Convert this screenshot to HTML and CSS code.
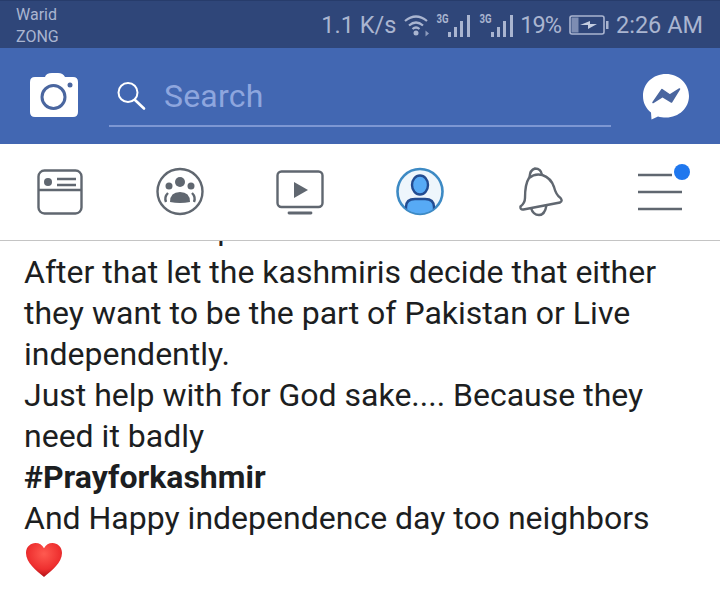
FILE: index.html
```html
<!DOCTYPE html>
<html lang="en">
<head>
<meta charset="utf-8">
<title>Post</title>
<link rel="stylesheet" href="styles.css">
</head>
<body>
<div class="screen">
  <div class="status">
    <div class="carriers"><span>Warid</span><span>ZONG</span></div>
    <div class="indicators">
      <span class="speed">1.1 K/s</span>
      <svg class="wifi" width="27" height="24" viewBox="0 0 27 24"><g fill="none" stroke="#aab5d0" stroke-width="2.200"><path d="M1 8Q12 -1 23 8"/><path d="M5 12.500Q12 6.500 19 12.500"/><path d="M8.500 16Q12 13 15.500 16"/></g><circle cx="12" cy="20" r="2.500" fill="#aab5d0"/><path d="M21.500 17.500l3.500 3-3.500 3z" fill="#8d9bbd"/></svg>
      <span class="sim"><i class="three-g">3G</i><svg width="23" height="22" viewBox="0 0 23 22"><g fill="#aab5d0"><rect x="0" y="17" width="3" height="5"/><rect x="6" y="12" width="3" height="10"/><rect x="12" y="6" width="3" height="16"/><rect x="19" y="0" width="3" height="22"/></g></svg></span>
      <span class="sim"><i class="three-g">3G</i><svg width="23" height="22" viewBox="0 0 23 22"><g fill="#aab5d0"><rect x="0" y="17" width="3" height="5"/><rect x="6" y="12" width="3" height="10"/><rect x="12" y="6" width="3" height="16"/><rect x="19" y="0" width="3" height="22"/></g></svg></span>
      <span class="percent">19%</span>
      <svg class="battery" width="40" height="20" viewBox="0 0 40 20"><rect x="1" y="1" width="34" height="18" rx="2" fill="none" stroke="#aab5d0" stroke-width="1.600"/><rect x="2.500" y="2.500" width="7" height="15" fill="#7d8db2"/><path d="M11 10l10-4v3h7l-9 5v-4z" fill="#c4cde0"/><rect x="37" y="6" width="2.500" height="8" fill="#aab5d0"/></svg>
      <span class="clock">2:26 AM</span>
    </div>
  </div>

  <header class="topbar">
    <svg class="camera" width="48" height="44" viewBox="0 0 48 44"><path fill="#fff" d="M5 4h10Q16 0 22 0h6q5 0 7 4h8q5 0 5 5v30q0 5-5 5H5q-5 0-5-5V9q0-5 5-5z"/><circle cx="23.500" cy="24" r="11.500" fill="none" stroke="#4a669f" stroke-width="3"/><circle cx="40" cy="12" r="2.500" fill="#4a669f"/></svg>
    <div class="search">
      <svg width="32" height="32" viewBox="0 0 32 32"><circle cx="13" cy="12.500" r="9.500" fill="none" stroke="#fff" stroke-width="2"/><path d="M20 20l9 8.500" fill="none" stroke="#fff" stroke-width="2.600" stroke-linecap="round"/></svg>
      <span>Search</span>
    </div>
    <svg class="messenger" width="48" height="48" viewBox="0 0 48 48"><path fill="#fff" d="M24 1C11 1 1 10.500 1 23c0 6.800 3 12.500 8 16.500l.5 7 6.500-3c2.400.7 5 1 8 1 13 0 23-9.500 23-21.500S37 1 24 1z"/><path fill="#4a669f" stroke="#4a669f" stroke-width="1.500" stroke-linejoin="round" d="M11 29.500l9-13 8 5.500 9.500-6-8 13-9-5.500z"/></svg>
  </header>

  <nav class="tabs">
    <svg class="tab" width="46" height="46" viewBox="0 0 46 46" fill="none" stroke="#606770" stroke-width="2.400"><rect x="1.500" y="1.500" width="43" height="43" rx="6"/><path d="M1.500 21h43"/><circle cx="11" cy="13" r="4" fill="#606770" stroke="none"/><path d="M20 10h19M20 16h19"/></svg>
    <svg class="tab" width="50" height="50" viewBox="0 0 50 50"><circle cx="25" cy="24.500" r="22.500" fill="none" stroke="#606770" stroke-width="2.400"/><g fill="#606770"><circle cx="25" cy="15" r="5"/><circle cx="14" cy="19" r="3.500"/><circle cx="36" cy="19" r="3.500"/><path d="M15 35q0-10 10-10t10 10q-10 2-20 0z"/></g><path d="M11 35q-2-5 2-9M39 35q2-5-2-9" fill="none" stroke="#606770" stroke-width="2.400"/></svg>
    <svg class="tab" width="48" height="46" viewBox="0 0 48 46" fill="none" stroke="#606770" stroke-width="2.400"><rect x="1.500" y="2.500" width="45" height="35.500" rx="4"/><path d="M13 44h22" stroke-width="2.800" stroke-linecap="round"/><path d="M18 13l14 8-14 8z" fill="#606770" stroke="none"/></svg>
    <svg class="tab" width="50" height="50" viewBox="0 0 50 50"><defs><clipPath id="disc"><circle cx="25" cy="24.500" r="22"/></clipPath></defs><circle cx="25" cy="24.500" r="22.500" fill="#eef6fc" stroke="#3d8ac4" stroke-width="2.600"/><g clip-path="url(#disc)"><path d="M11 50V40q0-8 9-8h10q9 0 9 8v10z" fill="#57aaf5" stroke="#234c91" stroke-width="2.400"/></g><ellipse cx="25" cy="18" rx="8" ry="9.500" fill="#57aaf5" stroke="#234c91" stroke-width="2.400"/></svg>
    <svg class="tab bell" width="46" height="50" viewBox="0 0 46 50" fill="none" stroke="#606770" stroke-width="2.400"><path d="M10.500 10Q11 3 16 1.500Q22 1.500 23 8"/><path d="M10 11Q16 6 23.300 8Q32 11 35 20Q37 28 41.500 31Q44 34 41 35.500L4.500 42.500Q1 43 1.500 39.500Q6 36 6 31Q6 17 10 11z"/><path d="M12 41Q14 48 20 48Q26 48 27.500 38"/></svg>
    <div class="tab menu">
      <svg width="46" height="46" viewBox="0 0 46 46" fill="none" stroke="#606770" stroke-width="2.600"><path d="M1 6h34M1 23h44M1 40h44"/></svg>
      <span class="dot"></span>
    </div>
  </nav>

  <main class="post">
    <div class="post-text">
      <p class="clipped">and their independence.</p>
      <p>After that let the kashmiris decide that either<br>they want to be the part of Pakistan or Live<br>independently.<br>Just help with for God sake.... Because they<br>need it badly<br><a class="tag">#Prayforkashmir</a><br>And Happy independence day too neighbors</p>
      <svg class="heart" width="38" height="36" viewBox="0 0 40 38"><defs><radialGradient id="h" cx="50%" cy="32%" r="70%"><stop offset="0" stop-color="#ff5a50"/><stop offset=".65" stop-color="#ee2f2f"/><stop offset="1" stop-color="#a90d14"/></radialGradient></defs><path fill="url(#h)" d="M20 37C12 30 1 22 1 11.500 1 5 6 1 11 1c4 0 7 2 9 5.500C22 3 25 1 29 1c5 0 10 4 10 10.500C39 22 28 30 20 37z"/></svg>
    </div>
  </main>
</div>
</body>
</html>
```

FILE: styles.css
```css
* { box-sizing: border-box; }
html, body { margin: 0; padding: 0; }
body { font-family: Roboto, "Liberation Sans", sans-serif; background: #fff; }
.screen { width: 720px; height: 590px; overflow: hidden; display: flex; flex-direction: column; }

.status { height: 48px; flex: none; background: #2f4679; color: #aab5d0; display: flex; justify-content: space-between; align-items: center; padding: 0 17px 0 16px; border-top: 1px solid #273c6b; }
.carriers { display: flex; flex-direction: column; gap: 3px; font-size: 16px; line-height: 19px; margin-top: 2px; }
.carriers span { display: block; }
.indicators { display: flex; align-items: center; font-size: 23.500px; line-height: 28px; margin-top: 1px; }
.speed { margin-right: 8px; }
.wifi { margin-right: 6px; }
.sim { display: flex; align-items: flex-end; margin-right: 9px; height: 24px; }
.sim + .sim { margin-right: 6px; }
.three-g { font-style: normal; font-weight: 700; font-size: 12px; line-height: 12px; align-self: flex-start; transform: scaleX(.8); width: 11px; display: flex; justify-content: center; }
.percent { margin-right: 8px; letter-spacing: -1px; }
.battery { margin-right: 7px; }

.topbar { height: 96px; flex: none; background: #4267b2; display: flex; align-items: flex-start; padding: 25px 30px 0 30px; }
.camera { flex: none; }
.search { width: 502px; height: 54px; margin-left: 31px; border-bottom: 2px solid #7d97d3; display: flex; align-items: center; color: #8ea6de; font-size: 32px; padding: 0 0 6px 6px; gap: 17px; }
.search span { letter-spacing: .2px; }
.search svg { flex: none; }
.messenger { margin-left: 31px; flex: none; }

.tabs { height: 97px; flex: none; border-bottom: 1px solid #c4c4c4; background: #fff; display: grid; grid-template-columns: repeat(6, 120px); justify-items: center; align-items: center; padding-bottom: 1px; }
.tab { display: block; }
.bell { margin-left: 4px; }
.menu { position: relative; width: 46px; height: 46px; }
.menu svg { display: block; }
.dot { position: absolute; right: -7px; top: -5px; width: 16px; height: 16px; border-radius: 50%; background: #1f77ee; }

.post { flex: 1; overflow: hidden; padding: 0 24px; color: #1c1e21; }
.post-text { margin-top: -32px; font-size: 32px; line-height: 41px; }
.post-text p { margin: 0; }
.post-text .clipped { margin-bottom: 2px; }
.tag { font-weight: 700; }
.heart { display: block; margin: 3px 0 0 1px; }
```
